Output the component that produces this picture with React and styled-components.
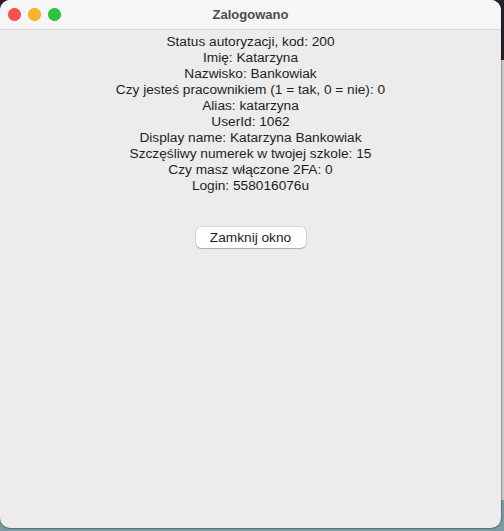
import React from "react";
import styled, { createGlobalStyle } from "styled-components";

const GlobalStyle = createGlobalStyle`
  html, body {
    margin: 0;
    padding: 0;
    background: #2b2029;
  }
  body {
    width: 504px;
    height: 531px;
    overflow: hidden;
    font-family: "Liberation Sans", Arial, sans-serif;
  }
`;

const Desktop = styled.div`
  width: 504px;
  height: 531px;
  display: flex;
  background: linear-gradient(to bottom, #2b2029 0, #2b2029 60px, #c9c9c9 60px, #c9c9c9 500px, #7b9aa3 500px);
`;

const Window = styled.div`
  width: 501px;
  height: 528px;
  border-radius: 10px;
  overflow: hidden;
  background: #ececec;
  display: flex;
  flex-direction: column;
  box-shadow: 0 0 0 1px rgba(0, 0, 0, 0.25);
`;

const TitleBar = styled.div`
  height: 29px;
  flex: none;
  background: #f6f6f6;
  border-bottom: 1px solid #d6d6d6;
  display: flex;
  align-items: center;
  position: relative;
  padding-left: 8px;
`;

const Lights = styled.div`
  display: flex;
  gap: 7px;
`;

const Light = styled.span`
  width: 13px;
  height: 13px;
  border-radius: 50%;
  background: ${(p) => p.$color};
  box-shadow: inset 0 0 0 0.5px rgba(0, 0, 0, 0.12);
`;

const Title = styled.div`
  position: absolute;
  left: 0;
  right: 0;
  text-align: center;
  font-size: 13px;
  font-weight: bold;
  color: #4b4b4b;
  pointer-events: none;
`;

const Content = styled.div`
  flex: 1;
  display: flex;
  flex-direction: column;
  align-items: center;
  padding-top: 4px;
`;

const Line = styled.div`
  font-size: 13.7px;
  line-height: 16px;
  color: #1e1e1e;
  text-align: center;
  white-space: nowrap;
`;

const CloseButton = styled.button`
  margin-top: 33px;
  width: 110px;
  height: 21px;
  border: none;
  border-radius: 5px;
  background: #ffffff;
  box-shadow: 0 0 0 0.5px rgba(0, 0, 0, 0.2), 0 1px 1px rgba(0, 0, 0, 0.18);
  font-family: "Liberation Sans", Arial, sans-serif;
  font-size: 13.7px;
  color: #1e1e1e;
  padding: 0;
`;

const lines = [
  "Status autoryzacji, kod: 200",
  "Imię: Katarzyna",
  "Nazwisko: Bankowiak",
  "Czy jesteś pracownikiem (1 = tak, 0 = nie): 0",
  "Alias: katarzyna",
  "UserId: 1062",
  "Display name: Katarzyna Bankowiak",
  "Szczęśliwy numerek w twojej szkole: 15",
  "Czy masz włączone 2FA: 0",
  "Login: 558016076u",
];

export default function App() {
  return (
    <>
      <GlobalStyle />
      <Desktop>
        <Window>
          <TitleBar>
            <Lights>
              <Light $color="#fe4f4b" />
              <Light $color="#fdb429" />
              <Light $color="#27c840" />
            </Lights>
            <Title>Zalogowano</Title>
          </TitleBar>
          <Content>
            {lines.map((l) => (
              <Line key={l}>{l}</Line>
            ))}
            <CloseButton>Zamknij okno</CloseButton>
          </Content>
        </Window>
      </Desktop>
    </>
  );
}
